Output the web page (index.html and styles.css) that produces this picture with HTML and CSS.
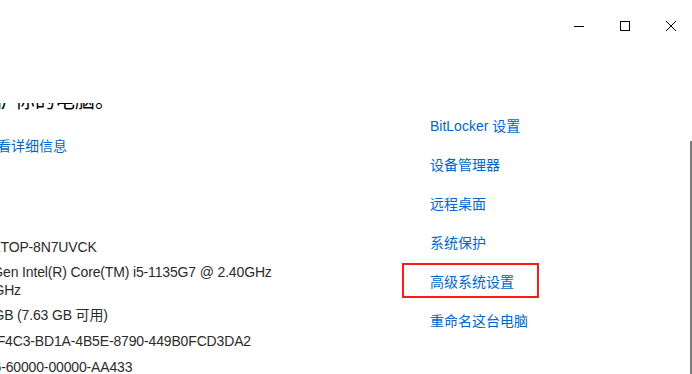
FILE: index.html
```html
<!DOCTYPE html>
<html lang="zh-CN">
<head>
<meta charset="utf-8">
<title>关于</title>
<link rel="stylesheet" href="styles.css">
</head>
<body>
<div class="window">
  <header class="titlebar">
    <button class="caption-btn" aria-label="最小化">
      <svg width="10" height="10" viewBox="0 0 10 10"><path d="M0 5.5H10" stroke="#000" stroke-width="1"/></svg>
    </button>
    <button class="caption-btn" aria-label="最大化">
      <svg width="10" height="10" viewBox="0 0 10 10"><rect x="0.5" y="0.5" width="9" height="9" fill="none" stroke="#000" stroke-width="1"/></svg>
    </button>
    <button class="caption-btn" aria-label="关闭">
      <svg width="10" height="10" viewBox="0 0 10 10"><path d="M0 0L10 10M10 0L0 10" stroke="#000" stroke-width="1"/></svg>
    </button>
  </header>
  <div class="page-head"></div>
  <main class="viewport">
    <div class="content">
      <section class="left">
        <p class="security">保护你的电脑。</p>
        <a class="link details" href="#">查看详细信息</a>
        <div class="specs">
          <div class="spec">DESKTOP-8N7UVCK</div>
          <div class="spec wrap">11th Gen Intel(R) Core(TM) i5-1135G7 @ 2.40GHz 2.42 GHz</div>
          <div class="spec">8.00 GB (7.63 GB 可用)</div>
          <div class="spec">9A6EF4C3-BD1A-4B5E-8790-449B0FCD3DA2</div>
          <div class="spec">00326-60000-00000-AA433</div>
        </div>
      </section>
      <nav class="right">
        <a class="link" href="#">BitLocker 设置</a>
        <a class="link" href="#">设备管理器</a>
        <a class="link" href="#">远程桌面</a>
        <a class="link" href="#">系统保护</a>
        <a class="link marked" href="#">高级系统设置</a>
        <a class="link" href="#">重命名这台电脑</a>
      </nav>
    </div>
    <div class="scrollbar"></div>
  </main>
</div>
</body>
</html>
```

FILE: styles.css
```css
html, body {
  margin: 0;
  padding: 0;
  background: #fff;
  overflow: hidden;
}

.window {
  width: 692px;
  height: 374px;
  overflow: hidden;
  font-family: "Liberation Sans", "Noto Sans CJK SC", sans-serif;
  color: #000;
}

.titlebar {
  height: 52px;
  display: flex;
  justify-content: flex-end;
  align-items: center;
  margin-right: -2px;
}

.caption-btn {
  width: 46px;
  height: 32px;
  border: 0;
  padding: 0;
  background: transparent;
  display: flex;
  align-items: center;
  justify-content: center;
}

.caption-btn svg {
  display: block;
}

.page-head {
  height: 51px;
}

.viewport {
  position: relative;
  height: 271px;
  overflow: hidden;
}

.content {
  display: flex;
  margin-left: -33px;
  margin-top: -13px;
}

.left {
  width: 463px;
  flex: none;
  display: flex;
  flex-direction: column;
  align-items: flex-start;
}

.security {
  margin: -3px 0 0 8px;
  font-size: 20px;
  line-height: 28px;
  white-space: nowrap;
}

.link {
  display: block;
  font-size: 14px;
  line-height: 20px;
  color: #0066cc;
  text-decoration: none;
  white-space: nowrap;
}

.details {
  margin: 21px 0 0 16px;
}

.specs {
  margin: 81px 0 0 -4px;
  width: 314px;
  display: flex;
  flex-direction: column;
  gap: 6px;
}

.spec {
  font-size: 14px;
  line-height: 20px;
  letter-spacing: -0.15px;
  color: #2b2b2b;
}

.spec.wrap {
  line-height: 18px;
}

.right {
  padding-top: 26px;
  display: flex;
  flex-direction: column;
  align-items: flex-start;
  gap: 19px;
}

.marked {
  position: relative;
}

.marked::after {
  content: "";
  position: absolute;
  left: -28px;
  top: -9px;
  width: 137px;
  height: 35px;
  box-sizing: border-box;
  border: 2px solid #ff1a1a;
}

.scrollbar {
  position: absolute;
  right: 0;
  top: 38px;
  width: 2px;
  bottom: 0;
  background: #7a7a7a;
}
```
